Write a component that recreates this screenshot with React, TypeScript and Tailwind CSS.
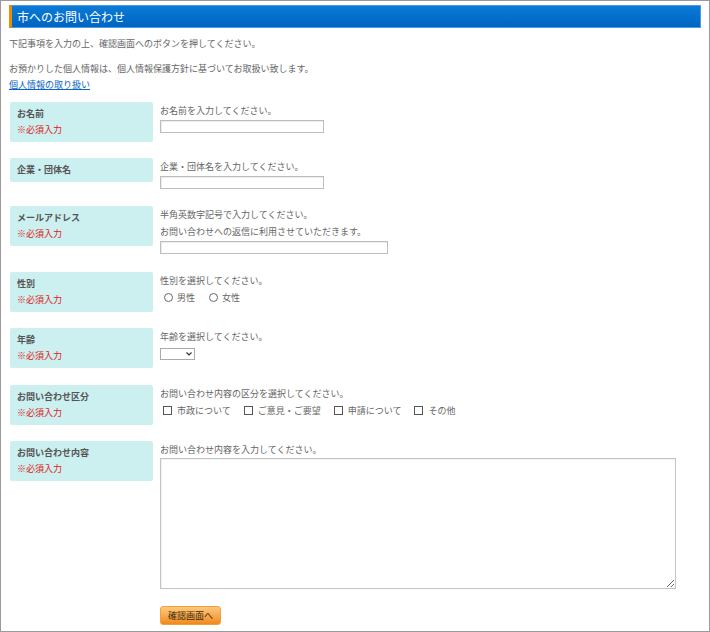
import { ReactNode } from "react";

const font = { fontFamily: '"Noto Sans CJK JP", "Noto Sans", sans-serif' };

function Required() {
  return <div className="text-[#e02020] font-normal">※必須入力</div>;
}

function Row({
  label,
  required,
  children,
  className = "mb-4",
}: {
  label: string;
  required?: boolean;
  children: ReactNode;
  className?: string;
}) {
  return (
    <div className={`flex items-start ${className}`}>
      <div className="ml-px w-[143px] shrink-0 rounded-[2px] bg-[#ccefef] py-[4px] pl-[7px] text-[9px] leading-[16px] font-bold text-[#555]">
        <div>{label}</div>
        {required && <Required />}
      </div>
      <div className="ml-[7px] flex-1 text-[9px] leading-[17px] text-[#666]">{children}</div>
    </div>
  );
}

function TextInput({ width }: { width: string }) {
  return (
    <input
      type="text"
      className={`mt-px block h-[13px] ${width} border border-[#bdbdbd] bg-white shadow-[inset_1px_1px_1px_rgba(0,0,0,0.08)] outline-none`}
    />
  );
}

function Radio({ label }: { label: string }) {
  return (
    <label className="flex items-center gap-[4px]">
      <span className="h-[9px] w-[9px] rounded-full border border-[#666] bg-white" />
      <span>{label}</span>
    </label>
  );
}

function Check({ label }: { label: string }) {
  return (
    <label className="flex items-center gap-[5px]">
      <span className="h-[9px] w-[9px] border border-[#555] bg-white" />
      <span>{label}</span>
    </label>
  );
}

export default function App() {
  return (
    <div style={font} className="h-[632px] w-[710px] overflow-hidden border border-[#9a9a9a] bg-white px-2 pt-1">
      {/* Title bar */}
      <div className="flex h-[23px] items-center border border-[#4d9be0] border-l-[3px] border-l-[#f08c00] bg-gradient-to-b from-[#0a7bd6] to-[#0064c2] pl-[5px] text-[12px] text-white">
        市へのお問い合わせ
      </div>

      <div className="text-[9px] leading-[16px] text-[#666]">
        <p className="mt-[8px]">下記事項を入力の上、確認画面へのボタンを押してください。</p>
        <p className="mt-[9px]">お預かりした個人情報は、個人情報保護方針に基づいてお取扱い致します。</p>
        <a href="#" className="block text-[#0a64c8] underline">
          個人情報の取り扱い
        </a>
      </div>

      <div className="mt-[9px]">
        <Row label="お名前" required>
          <div>お名前を入力してください。</div>
          <TextInput width="w-[164px]" />
        </Row>

        <Row label="企業・団体名" className="mb-[17px]">
          <div>企業・団体名を入力してください。</div>
          <TextInput width="w-[164px]" />
        </Row>

        <Row label="メールアドレス" required className="mb-[18px]">
          <div>半角英数字記号で入力してください。</div>
          <div>お問い合わせへの返信に利用させていただきます。</div>
          <TextInput width="w-[228px]" />
        </Row>

        <Row label="性別" required>
          <div>性別を選択してください。</div>
          <div className="flex gap-[14px] pl-[4px]">
            <Radio label="男性" />
            <Radio label="女性" />
          </div>
        </Row>

        <Row label="年齢" required className="mb-[17px]">
          <div>年齢を選択してください。</div>
          <div className="relative mt-[3px] h-[12px] w-[35px]">
            <select className="block h-[12px] w-[35px] appearance-none border border-[#aaa] bg-white text-[8px] outline-none" />
            <svg className="absolute right-[3px] top-[4px]" width="6" height="4" viewBox="0 0 6 4">
              <path d="M0.5 0.5 L3 3 L5.5 0.5" fill="none" stroke="#333" strokeWidth="1.2" />
            </svg>
          </div>
        </Row>

        <Row label="お問い合わせ区分" required>
          <div>お問い合わせ内容の区分を選択してください。</div>
          <div className="flex gap-[13px] pl-[3px]">
            <Check label="市政について" />
            <Check label="ご意見・ご要望" />
            <Check label="申請について" />
            <Check label="その他" />
          </div>
        </Row>

        <Row label="お問い合わせ内容" required className="mb-0">
          <div>お問い合わせ内容を入力してください。</div>
          <textarea className="block h-[131px] w-[516px] border border-[#c4c4c4] bg-white shadow-[inset_1px_1px_1px_rgba(0,0,0,0.06)] outline-none" />
        </Row>
      </div>

      <div className="ml-[151px] mt-[17px]">
        <button className="block h-[19px] w-[61px] rounded-[3px] border border-[#f0a040] bg-gradient-to-b from-[#ffc878] to-[#f08a14] text-[9px] text-[#3a2a10]">
          確認画面へ
        </button>
      </div>
    </div>
  );
}
